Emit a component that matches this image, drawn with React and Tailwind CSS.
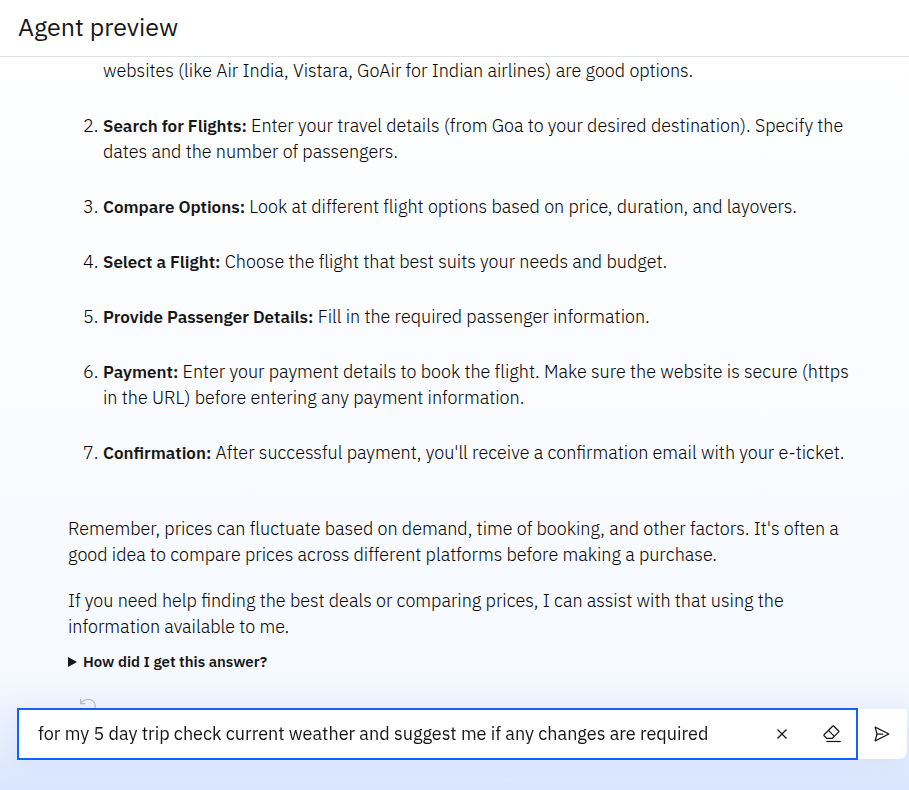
const steps = [
  { title: 'Search for Flights:', text: 'Enter your travel details (from Goa to your desired destination). Specify the dates and the number of passengers.' },
  { title: 'Compare Options:', text: 'Look at different flight options based on price, duration, and layovers.' },
  { title: 'Select a Flight:', text: 'Choose the flight that best suits your needs and budget.' },
  { title: 'Provide Passenger Details:', text: 'Fill in the required passenger information.' },
  { title: 'Payment:', text: 'Enter your payment details to book the flight. Make sure the website is secure (https in the URL) before entering any payment information.' },
  { title: 'Confirmation:', text: "After successful payment, you'll receive a confirmation email with your e-ticket." },
];

function Icon({ children }) {
  return (
    <svg viewBox="0 0 32 32" className="size-5" fill="currentColor" aria-hidden="true">
      {children}
    </svg>
  );
}

export default function App() {
  return (
    <div className="flex h-screen flex-col bg-linear-to-b from-white via-[#f6f9ff] via-85% to-[#d9e6fe] font-['IBM_Plex_Sans','Roboto',sans-serif] text-[#161616]">
      <header className="flex h-[57px] shrink-0 items-center border-b border-[#e0e0e0] bg-white px-[18px] pb-0.5">
        <h1 className="text-[25px] leading-8">Agent preview</h1>
      </header>

      <main className="min-h-0 flex-1 overflow-hidden pr-[52px] pl-[68px] text-lg leading-[26px] font-light text-black">
        <ol className="flex flex-col gap-[29px] pl-[35px]">
          <li className="mt-px">websites (like Air India, Vistara, GoAir for Indian airlines) are good options.</li>
          {steps.map((step, i) => (
            <li key={step.title} className="flex">
              <span className="-ml-5 w-5 shrink-0">{i + 2}.</span>
              <p>
                <strong className="text-[17px] font-semibold text-[#161616]">{step.title}</strong> {step.text}
              </p>
            </li>
          ))}
        </ol>
        <div className="mt-[50px] flex flex-col gap-5">
          <p>
            Remember, prices can fluctuate based on demand, time of booking, and other factors. It's often a good
            idea to compare prices across different platforms before making a purchase.
          </p>
          <p className="mr-5">
            If you need help finding the best deals or comparing prices, I can assist with that using the
            information available to me.
          </p>
        </div>
        <button type="button" className="mt-2.5 flex items-center gap-1.5 text-[15px] leading-6 font-semibold text-[#161616]">
          <svg viewBox="0 0 9 10" className="h-2.5 w-[9px]" fill="currentColor" aria-hidden="true">
            <path d="M0 0L9 5L0 10z" />
          </svg>
          How did I get this answer?
        </button>
        <button type="button" aria-label="Undo" className="mt-6 ml-3 block text-[#b9bdc7]">
          <svg viewBox="0 0 16 16" className="size-4" fill="none" stroke="currentColor" strokeWidth="1.2" aria-hidden="true">
            <path d="M.6 1v4.600h4.800M.8 5.400C3 2.400 5.400 1.400 8.400 1.400c4 0 6.800 2.600 6.800 6.600s-3 6.500-6.500 6.500" />
          </svg>
        </button>
      </main>

      <form className="mr-0.5 mb-[30px] ml-[17px] flex h-[52px] shrink-0 drop-shadow-[0_4px_12px_rgba(80,120,200,0.07)]" onSubmit={(e) => e.preventDefault()}>
        <div className="flex min-w-0 flex-1 items-center border-2 border-[#0f62fe] bg-white pr-3.5 pl-[19px]">
          <input
            type="text"
            aria-label="Message"
            defaultValue="for my 5 day trip check current weather and suggest me if any changes are required"
            className="min-w-0 flex-1 bg-transparent text-lg leading-6 outline-none"
          />
          <button type="button" aria-label="Clear text" className="mr-[30px]">
            <Icon>
              <path d="M17.4141 16L24 9.4141 22.5859 8 16 14.5859 9.4143 8 8 9.4141 14.5859 16 8 22.5859 9.4143 24 16 17.4141 22.5859 24 24 22.5859 17.4141 16z" />
            </Icon>
          </button>
          <button type="button" aria-label="Clear chat">
            <Icon>
              <path d="M7 27H30V29H7z" />
              <path d="M27.38,10.51,19.45,2.59a2,2,0,0,0-2.83,0l-14,14a2,2,0,0,0,0,2.83L7.13,24h9.59L27.38,13.34A2,2,0,0,0,27.38,10.51ZM15.89,22H8L4,18l6.31-6.31,7.93,7.92Zm3.76-3.76-7.92-7.93L18,4,26,11.930Z" />
            </Icon>
          </button>
        </div>
        <button type="submit" aria-label="Send" className="my-px flex w-[49px] items-center justify-center rounded-br-lg bg-white pr-0.5">
          <Icon>
            <path d="M27.45,15.11l-22-11a1,1,0,0,0-1.08.12,1,1,0,0,0-.33,1L7,16,4,26.740A1,1,0,0,0,5,28a1,1,0,0,0,.45-.11l22-11a1,1,0,0,0,0-1.780Zm-20.900,10L8.760,17H18V15H8.760L6.550,6.890,24.760,16Z" />
          </Icon>
        </button>
      </form>
    </div>
  );
}
